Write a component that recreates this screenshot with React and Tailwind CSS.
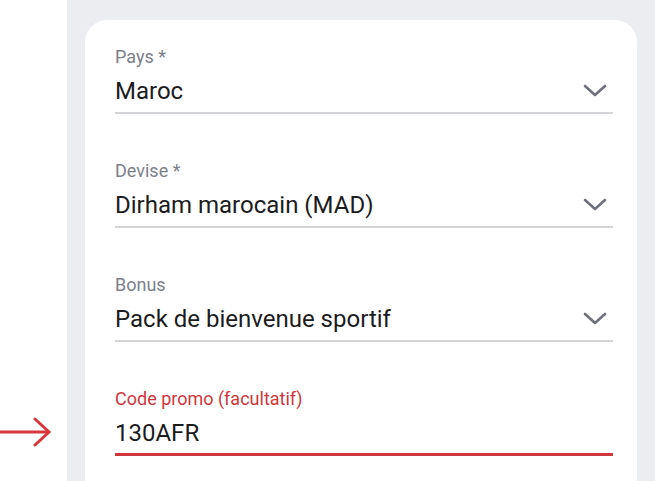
import React from 'react';

const fields = [
  { label: 'Pays *', value: 'Maroc', select: true },
  { label: 'Devise *', value: 'Dirham marocain (MAD)', select: true },
  { label: 'Bonus', value: 'Pack de bienvenue sportif', select: true },
  { label: 'Code promo (facultatif)', value: '130AFR', active: true },
];

function Chevron() {
  return (
    <svg width="24" height="14" viewBox="0 0 24 14" className="mr-[6px] shrink-0">
      <polyline
        points="2,2 12,11 22,2"
        fill="none"
        stroke="#6e717a"
        strokeWidth="2.6"
        strokeLinecap="round"
        strokeLinejoin="round"
      />
    </svg>
  );
}

function Field({ label, value, select, active }) {
  return (
    <div
      className={
        active
          ? 'border-b-[3px] border-[#d0363c] pb-[4px]'
          : 'border-b-2 border-[#d3d5d9] pb-[5px]'
      }
    >
      <div
        className={`text-[18px] leading-[24px] ${active ? 'text-[#d0363c]' : 'text-[#7d8089]'}`}
      >
        {label}
      </div>
      <div className="mt-[6px] flex h-[32px] items-center justify-between">
        <span className="text-[24px] leading-[32px] text-[#1c1c1e]">{value}</span>
        {select && <Chevron />}
      </div>
    </div>
  );
}

export default function App() {
  return (
    <div className="flex h-[481px] w-[655px] overflow-hidden bg-white font-['Roboto',_'Liberation_Sans',_sans-serif]">
      <div className="relative w-[67px] shrink-0">
        <svg width="54" height="32" viewBox="0 0 54 32" className="absolute left-0 top-[417px]">
          <line x1="0" y1="15" x2="48" y2="15" stroke="#d8373d" strokeWidth="3" />
          <polyline
            points="35,2 49,15 35,28"
            fill="none"
            stroke="#d8373d"
            strokeWidth="3"
            strokeLinecap="round"
          />
        </svg>
      </div>
      <div className="flex-1 bg-[#ebedf0] px-[18px] pt-[20px]">
        <div className="h-[600px] rounded-[22px] bg-white pl-[30px] pr-[24px] pt-[25px]">
          <div className="flex flex-col gap-[45px]">
            {fields.map((f) => (
              <Field key={f.label} {...f} />
            ))}
          </div>
        </div>
      </div>
    </div>
  );
}
